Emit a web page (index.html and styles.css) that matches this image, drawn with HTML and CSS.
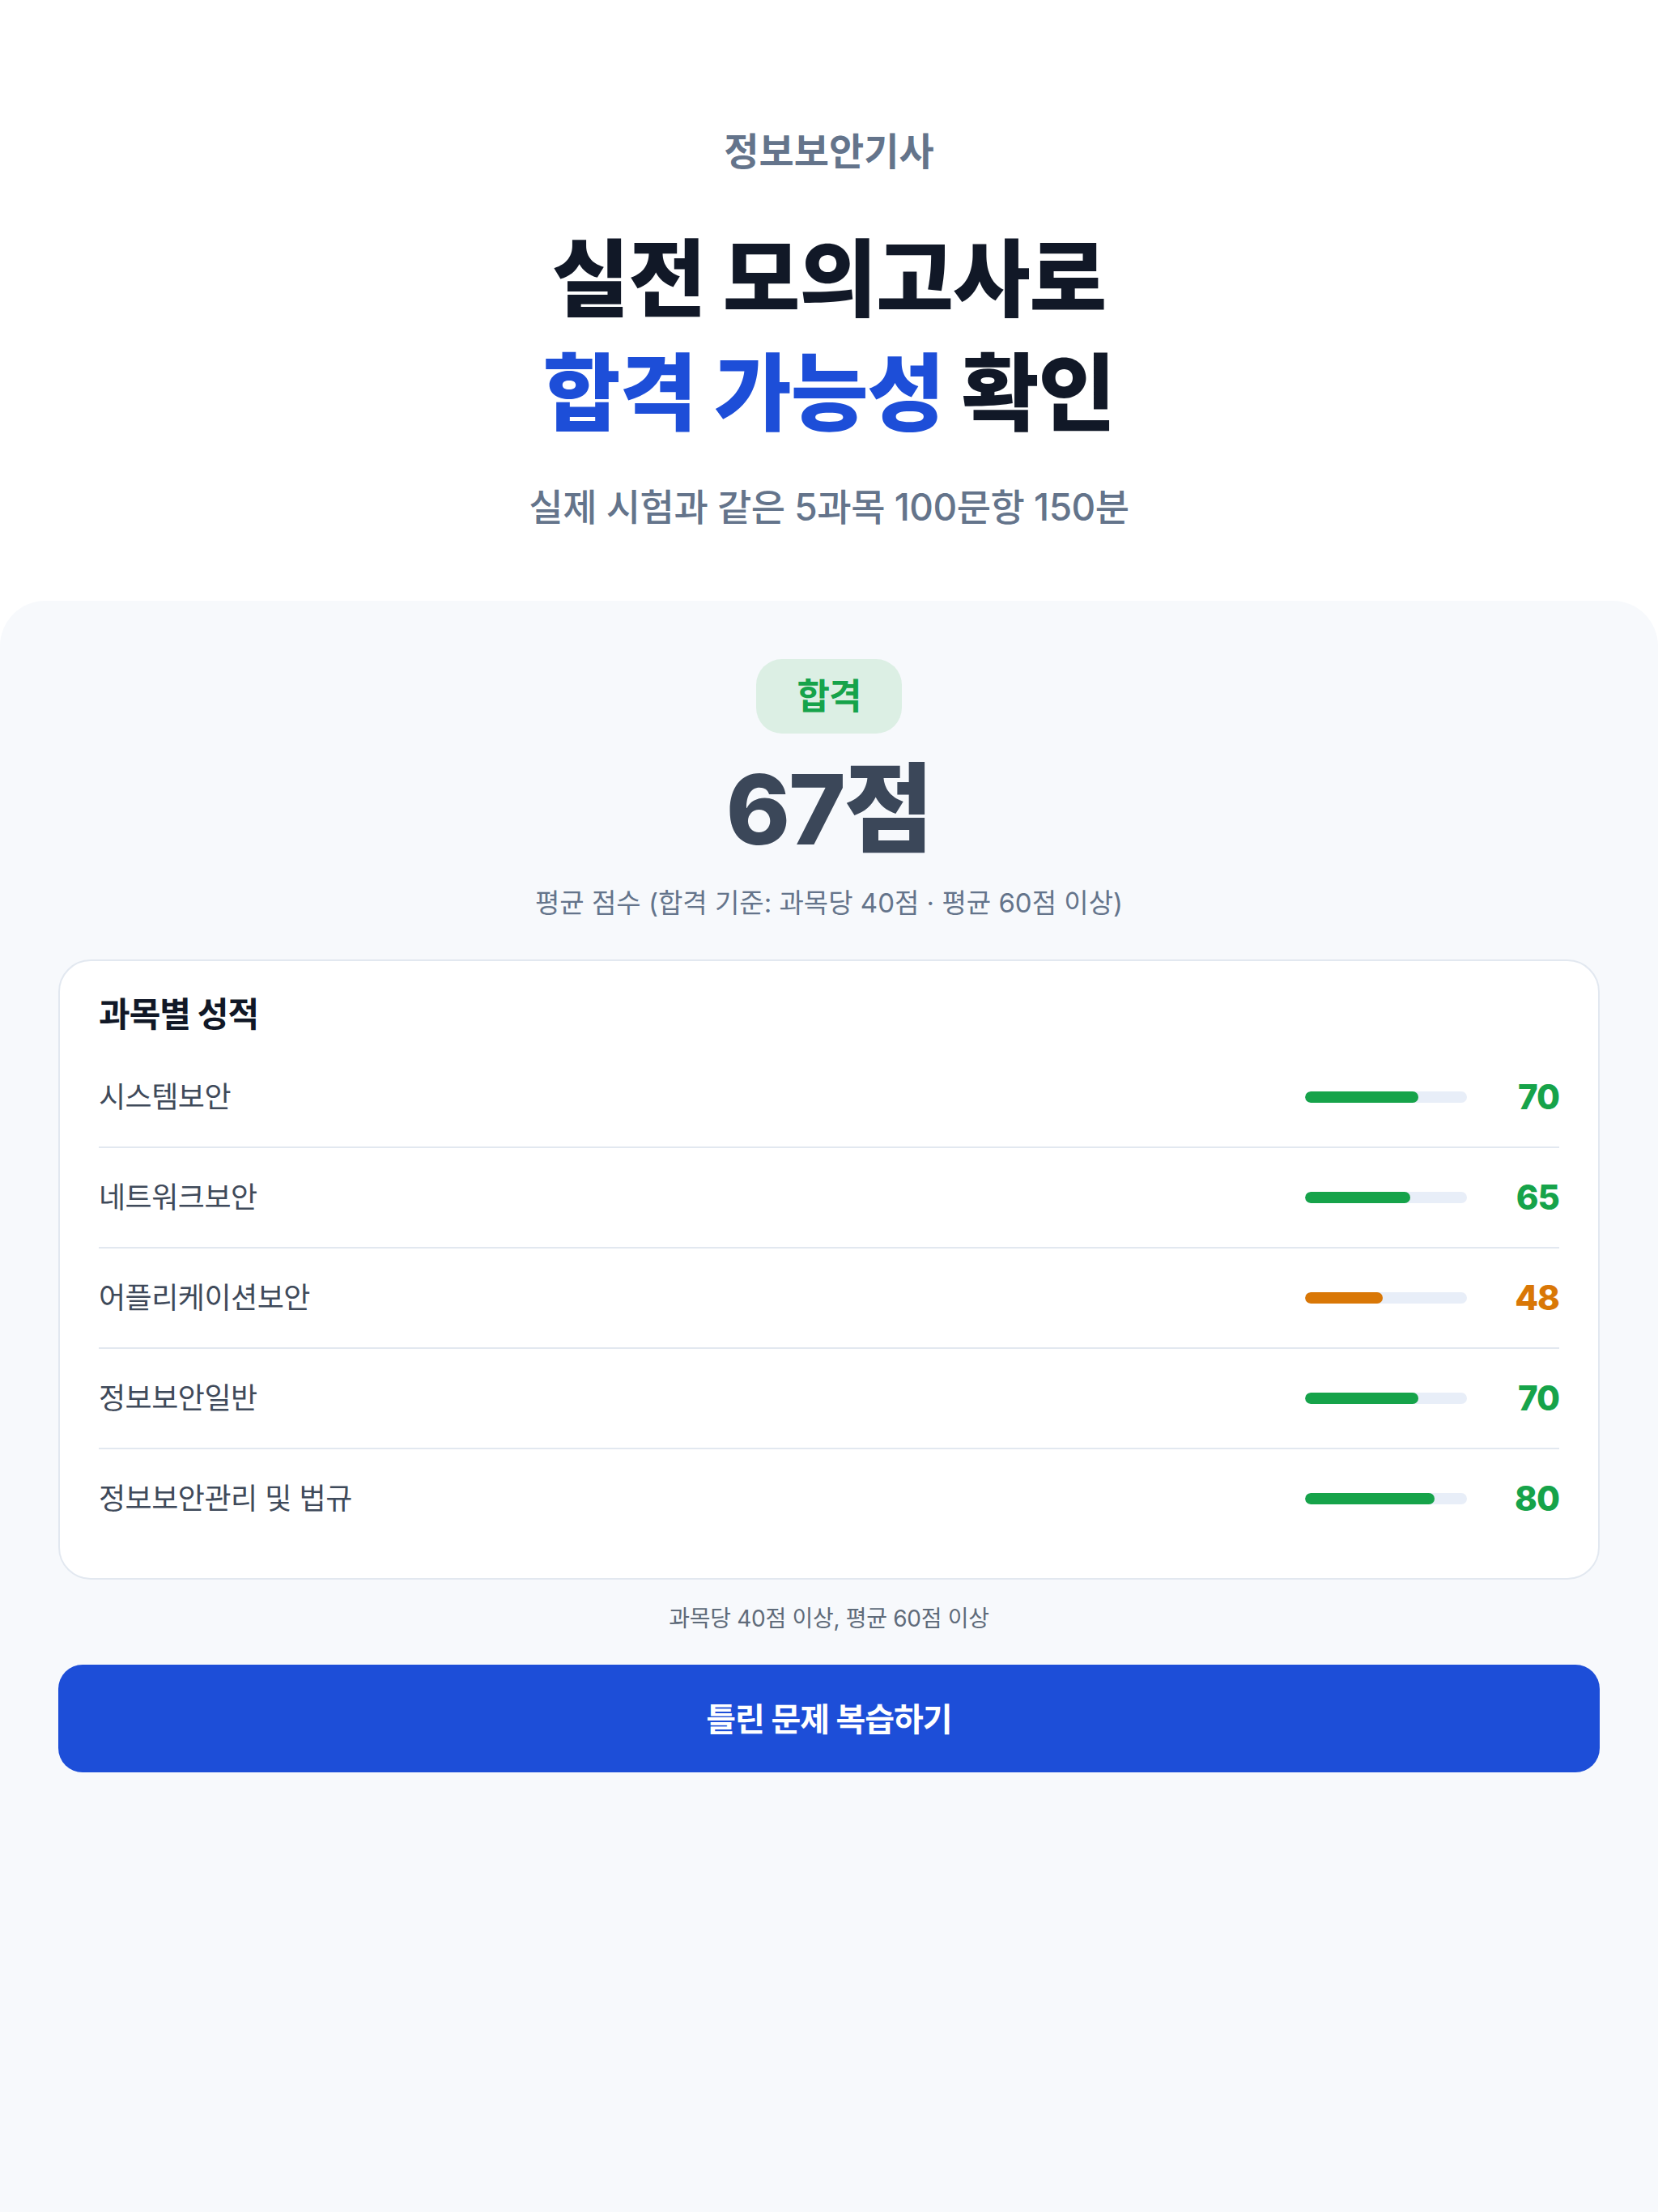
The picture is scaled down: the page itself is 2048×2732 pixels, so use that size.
FILE: index.html
```html
<!DOCTYPE html>
<html lang="ko">
<head>
<meta charset="utf-8">
<title>정보보안기사 실전 모의고사</title>
<link rel="stylesheet" href="styles.css">
</head>
<body>
<div class="page">
  <header class="hero">
    <p class="eyebrow">정보보안기사</p>
    <h1 class="title">실전 모의고사로<br><span class="accent">합격 가능성</span> 확인</h1>
    <p class="lead">실제 시험과 같은 5과목 100문항 150분</p>
  </header>

  <main class="result">
    <span class="badge">합격</span>
    <div class="score">67점</div>
    <p class="score-caption">평균 점수 (합격 기준: 과목당 40점 · 평균 60점 이상)</p>

    <section class="card">
      <h2 class="card-title">과목별 성적</h2>
      <ul class="subjects">
        <li class="subject">
          <span class="subject-name">시스템보안</span>
          <span class="track"><span class="fill pass" style="width:70%"></span></span>
          <span class="subject-score pass">70</span>
        </li>
        <li class="subject">
          <span class="subject-name">네트워크보안</span>
          <span class="track"><span class="fill pass" style="width:65%"></span></span>
          <span class="subject-score pass">65</span>
        </li>
        <li class="subject">
          <span class="subject-name">어플리케이션보안</span>
          <span class="track"><span class="fill warn" style="width:48%"></span></span>
          <span class="subject-score warn">48</span>
        </li>
        <li class="subject">
          <span class="subject-name">정보보안일반</span>
          <span class="track"><span class="fill pass" style="width:70%"></span></span>
          <span class="subject-score pass">70</span>
        </li>
        <li class="subject">
          <span class="subject-name">정보보안관리 및 법규</span>
          <span class="track"><span class="fill pass" style="width:80%"></span></span>
          <span class="subject-score pass">80</span>
        </li>
      </ul>
    </section>

    <p class="criteria">과목당 40점 이상, 평균 60점 이상</p>

    <button class="review-btn" type="button">틀린 문제 복습하기</button>
  </main>
</div>
</body>
</html>
```

FILE: styles.css
```css
* {
  box-sizing: border-box;
}

html, body {
  margin: 0;
  padding: 0;
}

body {
  background: #ffffff;
  font-family: Inter, "Noto Sans CJK KR", sans-serif;
  color: #111827;
}

.page {
  min-height: 100vh;
  display: flex;
  flex-direction: column;
}

/* ---------- hero ---------- */
.hero {
  padding: 156px 72px 85px;
  text-align: center;
}

.eyebrow {
  margin: 0;
  font-size: 47px;
  line-height: 62px;
  font-weight: 700;
  color: #64748b;
  letter-spacing: 0;
}

.title {
  margin: 57px 0 0;
  font-size: 104px;
  line-height: 141px;
  font-weight: 800;
  color: #111827;
  letter-spacing: -1px;
}

.title .accent {
  color: #1d4ed8;
}

.lead {
  margin: 38px 0 0;
  font-size: 46px;
  line-height: 62px;
  font-weight: 500;
  color: #64748b;
  letter-spacing: -0.5px;
}

/* ---------- result panel ---------- */
.result {
  flex: 1;
  background: #f7f9fc;
  border-radius: 56px 56px 0 0;
  padding: 72px 72px 80px;
  display: flex;
  flex-direction: column;
  align-items: center;
}

.badge {
  display: inline-block;
  padding: 24px 51px;
  font-size: 44px;
  line-height: 44px;
  font-weight: 700;
  letter-spacing: -1px;
  color: #16a34a;
  background: #dcefe4;
  border-radius: 32px;
}

.score {
  margin-top: 22px;
  font-size: 120px;
  line-height: 144px;
  font-weight: 800;
  letter-spacing: -2px;
  color: #3b4759;
}

.score-caption {
  margin: 19px 0 0;
  font-size: 33px;
  line-height: 48px;
  color: #64748b;
}

/* ---------- subject card ---------- */
.card {
  align-self: stretch;
  margin-top: 46px;
  background: #ffffff;
  border: 2px solid #e2e8f0;
  border-radius: 40px;
  padding: 40px 48px 37px;
}

.card-title {
  margin: 0 0 15px;
  font-size: 42px;
  line-height: 52px;
  font-weight: 700;
  letter-spacing: -1px;
  color: #111827;
}

.subjects {
  list-style: none;
  margin: 0;
  padding: 0;
}

.subject {
  display: flex;
  align-items: center;
  height: 124px;
  border-bottom: 2px solid #e2e8f0;
}

.subject:last-child {
  border-bottom: none;
  height: 122px;
}

.subject-name {
  flex: 1;
  font-size: 36px;
  line-height: 48px;
  letter-spacing: -0.5px;
  color: #3f4a5a;
}

.track {
  width: 200px;
  height: 14px;
  border-radius: 7px;
  background: #e8eef8;
  overflow: hidden;
}

.fill {
  display: block;
  height: 100%;
  border-radius: 7px;
}

.fill.pass { background: #16a34a; }
.fill.warn { background: #d97706; }

.subject-score {
  width: 114px;
  text-align: right;
  font-size: 42px;
  line-height: 52px;
  font-weight: 800;
  letter-spacing: -1px;
}

.subject-score.pass { color: #16a34a; }
.subject-score.warn { color: #d97706; }

/* ---------- footer actions ---------- */
.criteria {
  margin: 26px 0 0;
  font-size: 28px;
  line-height: 45px;
  letter-spacing: -0.3px;
  color: #5f6b7a;
}

.review-btn {
  align-self: stretch;
  margin-top: 34px;
  height: 133px;
  padding: 0 0 4px;
  border: none;
  border-radius: 30px;
  background: #1d4ed8;
  color: #ffffff;
  font-family: Inter, "Noto Sans CJK KR", sans-serif;
  font-size: 40px;
  font-weight: 700;
  letter-spacing: -1px;
  cursor: pointer;
}
```
